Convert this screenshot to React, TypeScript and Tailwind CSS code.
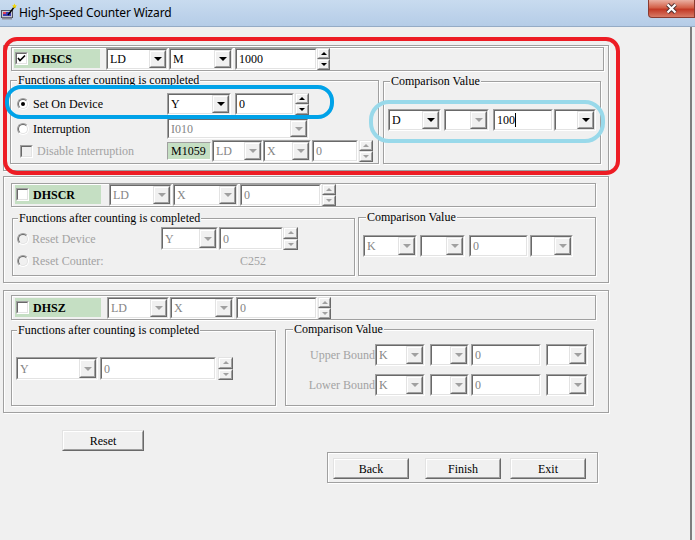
import React from "react";

const SERIF = "font-['Liberation_Serif','Times_New_Roman',serif]";
const GRAY = "text-[#858585]";
const DIM = "text-[#a3a3a3]";

function Arrow({ on = true }: { on?: boolean }) {
  return (
    <div
      className={`h-0 w-0 border-x-[4px] border-t-[4px] border-x-transparent ${
        on ? "border-t-black" : "border-t-[#a0a0a0]"
      }`}
    />
  );
}

function Raised({ className = "", children }: { className?: string; children?: React.ReactNode }) {
  return (
    <div
      className={`border border-t-[#e3e3e3] border-l-[#e3e3e3] border-b-[#696969] border-r-[#696969] bg-[#f0f0f0] ${className}`}
    >
      <div className="flex h-full w-full items-center justify-center border border-t-white border-l-white border-b-[#a0a0a0] border-r-[#a0a0a0]">
        {children}
      </div>
    </div>
  );
}

function Sunken({ className = "", children }: { className?: string; children?: React.ReactNode }) {
  return (
    <div className={`shrink-0 border border-t-[#a0a0a0] border-l-[#a0a0a0] border-b-white border-r-white ${className}`}>
      <div className="flex h-full w-full items-center overflow-hidden border border-t-[#696969] border-l-[#696969] border-b-[#e3e3e3] border-r-[#e3e3e3] bg-white">
        {children}
      </div>
    </div>
  );
}

function Combo({
  className = "",
  value = "",
  on = true,
  arrowOn,
}: {
  className?: string;
  value?: string;
  on?: boolean;
  arrowOn?: boolean;
}) {
  return (
    <Sunken className={className}>
      <span className={`flex-1 pl-[2px] ${on ? "text-black" : GRAY}`}>{value}</span>
      <Raised className="h-full w-[17px] shrink-0">
        <Arrow on={arrowOn ?? on} />
      </Raised>
    </Sunken>
  );
}

function Edit({
  className = "",
  value = "",
  on = true,
  cursor = false,
}: {
  className?: string;
  value?: string;
  on?: boolean;
  cursor?: boolean;
}) {
  return (
    <Sunken className={className}>
      <span className={`pl-[2px] ${on ? "text-black" : GRAY}`}>{value}</span>
      {cursor && <span className="h-[14px] w-px bg-black" />}
    </Sunken>
  );
}

function Spinner({ className = "", on = true }: { className?: string; on?: boolean }) {
  const c = on ? "border-b-black" : "border-b-[#a0a0a0]";
  const d = on ? "border-t-black" : "border-t-[#a0a0a0]";
  return (
    <div className={`flex shrink-0 flex-col ${className}`}>
      <Raised className="h-1/2 w-full">
        <div className={`h-0 w-0 border-x-[3px] border-b-[3px] border-x-transparent ${c}`} />
      </Raised>
      <Raised className="h-1/2 w-full">
        <div className={`h-0 w-0 border-x-[3px] border-t-[3px] border-x-transparent ${d}`} />
      </Raised>
    </div>
  );
}

function Radio({ checked = false, on = true, className = "" }: { checked?: boolean; on?: boolean; className?: string }) {
  return (
    <div
      className={`h-[12px] w-[12px] shrink-0 rounded-full border border-t-[#a0a0a0] border-l-[#a0a0a0] border-b-white border-r-white ${className}`}
    >
      <div
        className={`flex h-full w-full items-center justify-center rounded-full border border-t-[#696969] border-l-[#696969] border-b-[#e3e3e3] border-r-[#e3e3e3] ${
          on ? "bg-white" : "bg-[#f0f0f0]"
        }`}
      >
        {checked && <div className="h-[4px] w-[4px] rounded-full bg-black" />}
      </div>
    </div>
  );
}

function Check({ checked = false, on = true, className = "" }: { checked?: boolean; on?: boolean; className?: string }) {
  return (
    <div
      className={`h-[13px] w-[13px] shrink-0 border border-t-[#a0a0a0] border-l-[#a0a0a0] border-b-white border-r-white ${className}`}
    >
      <div
        className={`flex h-full w-full items-center justify-center border border-t-[#696969] border-l-[#696969] border-b-[#e3e3e3] border-r-[#e3e3e3] ${
          on ? "bg-white" : "bg-[#f0f0f0]"
        }`}
      >
        {checked && (
          <svg width="9" height="9" viewBox="0 0 9 9">
            <path d="M1 4 L3 6.5 L8 1.5" fill="none" stroke="#000" strokeWidth="1.6" />
          </svg>
        )}
      </div>
    </div>
  );
}

const ETCH = "border border-[#a0a0a0] shadow-[inset_1px_1px_0_#fff,1px_1px_0_#fff]";

function Group({
  className = "",
  label,
  labelClass = "",
  children,
}: {
  className?: string;
  label?: string;
  labelClass?: string;
  children?: React.ReactNode;
}) {
  return (
    <div className={`shrink-0 ${ETCH} ${className}`}>
      {label && <div className={`-mt-[8px] h-[14px] w-fit bg-[#f0f0f0] px-px ${labelClass}`}>{label}</div>}
      {children}
    </div>
  );
}

function Tag({ name, checked = false, className = "" }: { name: string; checked?: boolean; className?: string }) {
  return (
    <div className={`flex h-[19px] w-[86px] shrink-0 items-center bg-[#c5dfc3] ${className}`}>
      <Check checked={checked} className="ml-[1px]" />
      <span className="ml-[4px] font-bold">{name}</span>
    </div>
  );
}

function Button({ label, className = "" }: { label: string; className?: string }) {
  return (
    <Raised className={`h-[21px] w-[76px] shrink-0 ${className}`}>
      <span>{label}</span>
    </Raised>
  );
}

function TitleBar() {
  return (
    <div className="flex h-[27px] shrink-0 items-start border-b border-[#95abc5] bg-[linear-gradient(#c8dbef,#b5cce7)]">
      <svg className="ml-[1px] mt-[3px]" width="16" height="17" viewBox="0 0 16 17">
        <rect x="0.5" y="7.5" width="11" height="7" fill="#c8c8d0" stroke="#505060" />
        <rect x="2" y="9" width="8" height="4" fill="#3c3cb0" />
        <rect x="2" y="9" width="3" height="2" fill="#e0405a" />
        <rect x="1" y="14.5" width="10" height="2" fill="#8a8a98" />
        <path d="M7 12 L14 3" stroke="#000" strokeWidth="1.4" />
        <path d="M13.5 0.5 L14.3 2.2 L16 2.5 L14.7 3.6 L15 5.3 L13.5 4.4 L12 5.3 L12.3 3.6 L11 2.5 L12.7 2.2 Z" fill="#f5d800" />
      </svg>
      <span className="ml-[2px] mt-[5px] font-['Noto_Sans',sans-serif] text-[12px] leading-[16px] tracking-[-0.15px] text-black">
        High-Speed Counter Wizard
      </span>
      <div className="flex-1" />
      <div className="flex h-[18px] w-[47px] items-center justify-center rounded-bl-[4px] border border-t-0 border-[#8a3b30] bg-[linear-gradient(#eab0a2,#d36048_45%,#c23a26_55%,#d87b66)]">
        <svg width="13" height="11" viewBox="0 0 13 11">
          <path d="M2.5 1.5 L10.5 9.5 M10.5 1.5 L2.5 9.5" stroke="#4a3030" strokeWidth="4" />
          <path d="M2.5 1.5 L10.5 9.5 M10.5 1.5 L2.5 9.5" stroke="#fff" strokeWidth="2.2" />
        </svg>
      </div>
    </div>
  );
}

export default function App() {
  return (
    <div className="flex h-[540px] w-[695px] flex-col overflow-hidden bg-[#f0f0f0]">
      <TitleBar />
      <div className="flex flex-1">
        <div className={`relative flex w-[690px] shrink-0 flex-col items-start pl-[3px] text-[12px] leading-[14px] text-black ${SERIF}`}>
          {/* DHSCS */}
          <div className={`mt-[18px] h-[126px] w-[606px] shrink-0 ${ETCH}`}>
            <div className={`ml-[7px] mt-[1px] flex h-[24px] w-[593px] items-start ${ETCH}`}>
              <Tag name="DHSCS" checked className="ml-[2px] mt-[1px]" />
              <Combo className="ml-[6px] h-[22px] w-[62px]" value="LD" />
              <Combo className="ml-[1px] h-[22px] w-[64px]" value="M" />
              <Edit className="ml-[2px] h-[22px] w-[82px]" value="1000" />
              <Spinner className="h-[22px] w-[13px]" />
            </div>
            <div className="mt-[9px] flex items-start">
              <Group className="ml-[6px] h-[84px] w-[369px]" label="Functions after counting is completed" labelClass="ml-[6px]">
                <div className="mt-[6px] flex h-[22px] items-center">
                  <div className="flex w-[156px] items-center">
                    <Radio checked className="ml-[6px]" />
                    <span className="ml-[4px]">Set On Device</span>
                  </div>
                  <Combo className="h-[22px] w-[64px]" value="Y" />
                  <Edit className="ml-[4px] h-[22px] w-[59px]" value="0" />
                  <Spinner className="ml-[1px] h-[22px] w-[14px]" />
                </div>
                <div className="mt-[3px] flex h-[21px] items-center">
                  <div className="flex w-[156px] items-center">
                    <Radio className="ml-[6px]" />
                    <span className="ml-[4px]">Interruption</span>
                  </div>
                  <Combo className="h-[21px] w-[142px]" value="I010" on={false} />
                </div>
                <div className="mt-[1px] flex h-[22px] items-center">
                  <div className="flex w-[156px] items-center">
                    <Check on={false} className="ml-[9px]" />
                    <span className={`ml-[4px] ${DIM}`}>Disable Interruption</span>
                  </div>
                  <div className="flex h-[18px] w-[44px] shrink-0 items-center border border-t-[#a0a0a0] border-l-[#a0a0a0] border-b-white border-r-white bg-[#c5dfc3] pl-[3px]">
                    M1059
                  </div>
                  <Combo className="ml-[1px] h-[22px] w-[51px]" value="LD" on={false} />
                  <Combo className="h-[22px] w-[48px]" value="X" on={false} />
                  <Edit className="ml-[1px] h-[22px] w-[46px]" value="0" on={false} />
                  <Spinner className="ml-[1px] h-[22px] w-[14px]" on={false} />
                </div>
              </Group>
              <Group className="ml-[4px] mt-[1px] h-[83px] w-[218px]" label="Comparison Value" labelClass="ml-[6px]">
                <div className="mt-[21px] flex h-[22px] items-center">
                  <Combo className="ml-[4px] h-[22px] w-[53px]" value="D" />
                  <Combo className="ml-[3px] h-[22px] w-[45px]" arrowOn={false} />
                  <Edit className="ml-[4px] h-[22px] w-[60px]" value="100" cursor />
                  <Combo className="ml-[1px] h-[22px] w-[42px]" />
                </div>
              </Group>
            </div>
          </div>

          {/* DHSCR */}
          <div className={`mt-[5px] h-[107px] w-[606px] shrink-0 ${ETCH}`}>
            <div className={`ml-[7px] mt-[6px] flex h-[24px] w-[585px] items-start ${ETCH}`}>
              <Tag name="DHSCR" className="ml-[3px] mt-[1px]" />
              <Combo className="ml-[8px] h-[22px] w-[63px]" value="LD" on={false} />
              <Combo className="ml-[1px] h-[22px] w-[65px]" value="X" on={false} />
              <Edit className="ml-[2px] h-[22px] w-[81px]" value="0" on={false} />
              <Spinner className="ml-[1px] h-[22px] w-[14px]" on={false} />
            </div>
            <div className="mt-[10px] flex items-start">
              <Group className="ml-[8px] mt-[1px] h-[58px] w-[343px]" label="Functions after counting is completed" labelClass="ml-[5px]">
                <div className="mt-[2px] flex h-[23px] items-center">
                  <div className="flex w-[148px] items-center">
                    <Radio on={false} className="ml-[4px]" />
                    <span className={`ml-[3px] ${DIM}`}>Reset Device</span>
                  </div>
                  <Combo className="h-[23px] w-[57px]" value="Y" on={false} />
                  <Edit className="ml-[1px] h-[23px] w-[64px]" value="0" on={false} />
                  <Spinner className="h-[23px] w-[15px]" on={false} />
                </div>
                <div className="mt-[1px] flex h-[20px] items-center">
                  <div className="flex w-[148px] items-center">
                    <Radio on={false} className="ml-[4px]" />
                    <span className={`ml-[3px] ${DIM}`}>Reset Counter:</span>
                  </div>
                  <span className={`ml-[79px] ${DIM}`}>C252</span>
                </div>
              </Group>
              <Group className="ml-[3px] h-[59px] w-[238px]" label="Comparison Value" labelClass="ml-[7px]">
                <div className="mt-[11px] flex h-[22px] items-center">
                  <Combo className="ml-[4px] h-[22px] w-[54px]" value="K" on={false} />
                  <Combo className="ml-[3px] h-[22px] w-[45px]" on={false} />
                  <Edit className="ml-[4px] h-[22px] w-[59px]" value="0" on={false} />
                  <Combo className="ml-[2px] h-[22px] w-[43px]" on={false} />
                </div>
              </Group>
            </div>
          </div>

          {/* DHSZ */}
          <div className={`mt-[7px] h-[123px] w-[606px] shrink-0 ${ETCH}`}>
            <div className={`ml-[7px] mt-[4px] flex h-[25px] w-[585px] items-start ${ETCH}`}>
              <Tag name="DHSZ" className="ml-[3px] mt-[2px]" />
              <Combo className="ml-[6px] mt-[1px] h-[22px] w-[62px]" value="LD" on={false} />
              <Combo className="ml-[1px] mt-[1px] h-[22px] w-[64px]" value="X" on={false} />
              <Edit className="ml-[2px] mt-[1px] h-[22px] w-[81px]" value="0" on={false} />
              <Spinner className="ml-[1px] mt-[1px] h-[22px] w-[13px]" on={false} />
            </div>
            <div className="mt-[9px] flex items-start">
              <Group className="ml-[7px] mt-[1px] h-[76px] w-[265px]" label="Functions after counting is completed" labelClass="ml-[5px]">
                <div className="mt-[20px] flex h-[23px] items-center">
                  <Combo className="ml-[4px] h-[23px] w-[82px]" value="Y" on={false} />
                  <Edit className="ml-[2px] h-[23px] w-[116px]" value="0" on={false} />
                  <Spinner className="ml-[2px] h-[23px] w-[15px]" on={false} />
                </div>
              </Group>
              <Group className="ml-[9px] h-[77px] w-[309px]" label="Comparison Value" labelClass="ml-[7px]">
                {["Upper Bound", "Lower Bound"].map((b) => (
                  <div key={b} className="mt-[8px] flex h-[22px] items-center">
                    <span className={`w-[89px] shrink-0 text-right ${DIM}`}>{b}</span>
                    <Combo className="h-[22px] w-[50px]" value="K" on={false} />
                    <Combo className="ml-[5px] h-[22px] w-[39px]" on={false} />
                    <Edit className="ml-[2px] h-[22px] w-[70px]" value="0" on={false} />
                    <Combo className="ml-[5px] h-[22px] w-[42px]" on={false} />
                  </div>
                ))}
              </Group>
            </div>
          </div>

          <Raised className="ml-[59px] mt-[17px] h-[21px] w-[82px]">
            <span>Reset</span>
          </Raised>

          <div className={`ml-[324px] mt-[1px] flex h-[31px] w-[271px] items-start pt-[5px] ${ETCH}`}>
            <Button label="Back" className="ml-[5px]" />
            <Button label="Finish" className="ml-[16px]" />
            <Button label="Exit" className="ml-[9px]" />
          </div>

          {/* annotation marks */}
          <div className="absolute left-[3px] top-[10px] h-[138px] w-[617px] rounded-[14px] border-[4px] border-[#ed1c24]" />
          <div className="absolute left-[5px] top-[58px] h-[34px] w-[329px] rounded-[16px] border-[4px] border-[#00a2e8]" />
          <div className="absolute left-[369px] top-[73px] h-[43px] w-[236px] rounded-[20px] border-[4px] border-[#99d9ea]" />
        </div>
        <div className="w-[2px] shrink-0 bg-[#7d7d7d]" />
        <div className="flex-1 bg-[#f0f0f0]" />
      </div>
    </div>
  );
}
